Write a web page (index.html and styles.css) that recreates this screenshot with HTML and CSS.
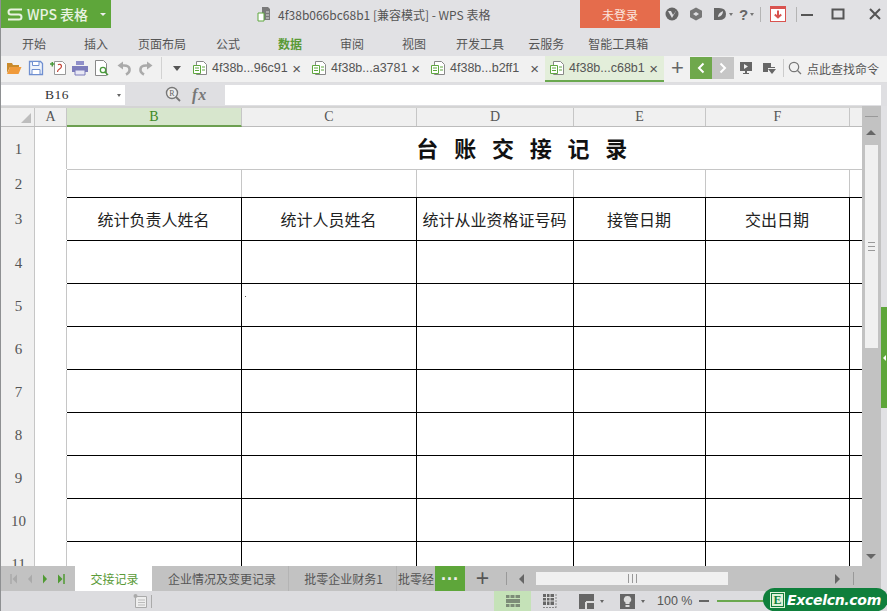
FILE: index.html
```html
<!DOCTYPE html>
<html lang="zh">
<head>
<meta charset="utf-8">
<title>4f38b066bc68b1 - WPS 表格</title>
<link rel="stylesheet" href="styles.css">
</head>
<body>
<div class="app">
  <header class="titlebar">
    <div class="brand">
      <svg class="brand-s" viewBox="0 0 16 13" width="16" height="13"><path d="M15 1.500H4Q1.500 1.500 1.500 4T4 6.500H12Q14.500 6.500 14.500 9T12 11.500H1" fill="none" stroke="#e9f3e2" stroke-width="2"/></svg>
      <span class="brand-name">WPS 表格</span>
      <span class="brand-caret"></span>
    </div>
    <div class="doc-title">
      <svg viewBox="0 0 16 16" width="16" height="16"><path d="M5 1h6l2 2v11H7V8H5z" fill="#7a7a7a"/><path d="M1 7h6v8H1z" fill="#fff" stroke="#5fa73f"/><path d="M9 6h3M9 9h3M9 12h3" stroke="#ddd"/></svg>
      <span>4f38b066bc68b1 [兼容模式] - WPS 表格</span>
    </div>
    <div class="login">未登录</div>
    <div class="win-icons">
      <svg class="wi" viewBox="0 0 14 14" width="14" height="14"><circle cx="7" cy="7" r="6.500" fill="#666"/><path d="M3 4h8L7 11z" fill="#e0e0e3"/><path d="M6 4h5L8 8z" fill="#666"/></svg>
      <svg class="wi" viewBox="0 0 14 14" width="14" height="14"><path d="M7 .5l6 3.200v6.600l-6 3.200-6-3.200V3.700z" fill="#777"/><path d="M4 7l3-2 3 2-3 2z" fill="#e0e0e3"/></svg>
      <svg class="wi wi-d" viewBox="0 0 14 14" width="14" height="14"><path d="M1 1h5q7 0 7 6t-7 6H1z" fill="#666"/><path d="M5 10q0-4 5-6 0 5-5 6z" fill="#e0e0e3"/></svg>
      <span class="mini-caret"></span>
      <span class="help">?</span>
      <span class="mini-caret"></span>
      <span class="vsep"></span>
      <svg class="wi wi-red" viewBox="0 0 16 16" width="16" height="16"><rect x=".5" y="1" width="15" height="14.500" fill="#fff" stroke="#d9534f"/><rect x="0" y="0" width="16" height="3" fill="#d9534f"/><path d="M8 4.500v7M4.800 8.500L8 11.500l3.200-3" fill="none" stroke="#d9534f" stroke-width="2"/></svg>
      <span class="vsep"></span>
      <svg class="wc wc-min" viewBox="0 0 14 14" width="14" height="14"><path d="M1 8h12" stroke="#555" stroke-width="2"/></svg>
      <svg class="wc wc-max" viewBox="0 0 14 14" width="14" height="14"><path d="M1.500 2.500h11v9h-11z" fill="none" stroke="#555" stroke-width="2"/></svg>
      <svg class="wc wc-close" viewBox="0 0 14 14" width="14" height="14"><path d="M2 2l10 10M12 2L2 12" stroke="#555" stroke-width="2"/></svg>
    </div>
  </header>

  <nav class="ribbon">
    <span class="rt rt-start">开始</span>
    <span class="rt rt-insert">插入</span>
    <span class="rt rt-page">页面布局</span>
    <span class="rt rt-formula">公式</span>
    <span class="rt rt-data">数据</span>
    <span class="rt rt-review">审阅</span>
    <span class="rt rt-view">视图</span>
    <span class="rt rt-dev">开发工具</span>
    <span class="rt rt-cloud">云服务</span>
    <span class="rt rt-smart">智能工具箱</span>
  </nav>

  <div class="toolbar">
    <div class="quick">
      <svg viewBox="0 0 16 16" width="16" height="16"><path d="M1 3h5l1 2h6v2H4L1 13z" fill="#c98a2b"/><path d="M4 7h11.500l-3 7H1z" fill="#f09a3a"/></svg>
      <svg viewBox="0 0 16 16" width="16" height="16"><path d="M1.500 1.500h11l2 2v11h-13z" fill="#eef3fb" stroke="#6f8fd0" stroke-width="1.300"/><path d="M4.500 1.500h6.500v4H4.500z" fill="#fff" stroke="#6f8fd0"/><path d="M4 9.500h8v5H4z" fill="#fff" stroke="#6f8fd0"/></svg>
      <svg viewBox="0 0 16 16" width="16" height="16"><path d="M4.500 1.500h8l3 3v10h-11z" fill="#fff" stroke="#999"/><path d="M11.500 6a2 2 0 0 0-3.500-1M11.500 6q0 2-2 3t-2 3" fill="none" stroke="#c0392b" stroke-width="1.100"/><path d="M0 4h4.500M2.300 2v4.500" stroke="#4a9a3c" stroke-width="1.500"/></svg>
      <svg viewBox="0 0 16 16" width="16" height="16"><path d="M4 1h8v4H4z" fill="#8f8fc9"/><path d="M0 6h16v6H0z" fill="#7d7dbb"/><path d="M3 10h10v5H3z" fill="#e8e8f5" stroke="#7d7dbb"/></svg>
      <svg viewBox="0 0 16 16" width="16" height="16"><path d="M1.500.5h8l3 3v12h-11z" fill="#fff" stroke="#888"/><circle cx="9" cy="10" r="2.700" fill="none" stroke="#4a9a3c" stroke-width="1.300"/><path d="M11 12l3 3" stroke="#4a9a3c" stroke-width="1.500"/></svg>
      <svg viewBox="0 0 16 16" width="16" height="16"><path d="M10 14.500q4-2 3.500-5.500T8 5.500H6" fill="none" stroke="#aaa" stroke-width="2.600"/><path d="M7 1.500v8L1.500 5.500z" fill="#aaa"/></svg>
      <svg viewBox="0 0 16 16" width="16" height="16"><path d="M6 14.500q-4-2-3.500-5.500T8 5.500h2" fill="none" stroke="#aaa" stroke-width="2.600"/><path d="M9 1.500v8l5.500-4z" fill="#aaa"/></svg>
      <span class="tb-sep"></span>
      <span class="tb-caret"></span>
    </div>
    <div class="doc-tabs">
      <div class="dt"><svg class="dt-ico" viewBox="0 0 14 15" width="14" height="15"><path d="M3.500.5h7l3 3v10h-10z" fill="#fff" stroke="#888"/><path d="M.5 4.500h7v8h-7z" fill="#fff" stroke="#5fa73f"/><path d="M2 7h4M2 9.500h4M9 6h3M9 9h3" stroke="#5fa73f"/></svg><span class="dt-name">4f38b...96c91</span><span class="dt-x">×</span></div>
      <div class="dt"><svg class="dt-ico" viewBox="0 0 14 15" width="14" height="15"><path d="M3.500.5h7l3 3v10h-10z" fill="#fff" stroke="#888"/><path d="M.5 4.500h7v8h-7z" fill="#fff" stroke="#5fa73f"/><path d="M2 7h4M2 9.500h4M9 6h3M9 9h3" stroke="#5fa73f"/></svg><span class="dt-name">4f38b...a3781</span><span class="dt-x">×</span></div>
      <div class="dt"><svg class="dt-ico" viewBox="0 0 14 15" width="14" height="15"><path d="M3.500.5h7l3 3v10h-10z" fill="#fff" stroke="#888"/><path d="M.5 4.500h7v8h-7z" fill="#fff" stroke="#5fa73f"/><path d="M2 7h4M2 9.500h4M9 6h3M9 9h3" stroke="#5fa73f"/></svg><span class="dt-name">4f38b...b2ff1</span><span class="dt-x">×</span></div>
      <div class="dt dt-active"><svg class="dt-ico" viewBox="0 0 14 15" width="14" height="15"><path d="M3.500.5h7l3 3v10h-10z" fill="#fff" stroke="#888"/><path d="M.5 4.500h7v8h-7z" fill="#fff" stroke="#5fa73f"/><path d="M2 7h4M2 9.500h4M9 6h3M9 9h3" stroke="#5fa73f"/></svg><span class="dt-name">4f38b...c68b1</span><span class="dt-x">×</span></div>
    </div>
    <div class="tb-right">
      <span class="tb-plus">+</span>
      <span class="nav-btn nav-prev"><svg viewBox="0 0 10 12" width="10" height="12"><path d="M7.500 1.500L3 6l4.500 4.500" fill="none" stroke="#fff" stroke-width="2"/></svg></span>
      <span class="nav-btn nav-next"><svg viewBox="0 0 10 12" width="10" height="12"><path d="M2.500 1.500L7 6l-4.500 4.500" fill="none" stroke="#fff" stroke-width="2"/></svg></span>
      <svg class="tr-play" viewBox="0 0 14 14" width="14" height="14"><path d="M1 1h12v9H8v2h2v1H4v-1h2v-2H1z" fill="#666"/><path d="M5 3l4 2.500L5 8z" fill="#eee"/></svg>
      <svg class="tr-pin" viewBox="0 0 14 14" width="14" height="14"><path d="M1 2h8v4h4v1H6v4H1z" fill="#666"/><path d="M6 8h8l-4 5z" fill="#666"/></svg>
      <span class="tr-sep"></span>
      <svg class="tr-find" viewBox="0 0 14 14" width="14" height="14"><circle cx="6" cy="6" r="4.700" fill="none" stroke="#777" stroke-width="1.200"/><path d="M9.500 9.500l3.500 3.500" stroke="#777" stroke-width="1.300"/></svg>
      <span class="tr-cmd">点此查找命令</span>
    </div>
  </div>

  <div class="formula">
    <div class="namebox"><span class="nb-text">B16</span><span class="nb-caret"></span></div>
    <svg class="fx-search" viewBox="0 0 16 16" width="16" height="16"><circle cx="7" cy="7" r="5.500" fill="#eee" stroke="#777" stroke-width="1.400"/><path d="M11 11l4 4" stroke="#777" stroke-width="1.800"/><text x="7" y="10" font-size="8" text-anchor="middle" fill="#666" class="fx-r">R</text></svg>
    <span class="fx">fx</span>
    <div class="fx-input"></div>
  </div>

  <div class="sheet-area">
    <div class="grid-col">
      <div class="col-heads">
        <div class="corner"><span class="corner-tri"></span></div>
        <div class="ch ch-a">A</div>
        <div class="ch ch-b ch-sel">B</div>
        <div class="ch ch-c">C</div>
        <div class="ch ch-d">D</div>
        <div class="ch ch-e">E</div>
        <div class="ch ch-f">F</div>
        <div class="ch ch-g"></div>
      </div>
      <div class="grid-body">
        <div class="row-heads">
          <div class="rh r1">1</div>
          <div class="rh r2">2</div>
          <div class="rh r3">3</div>
          <div class="rh">4</div>
          <div class="rh">5</div>
          <div class="rh">6</div>
          <div class="rh">7</div>
          <div class="rh">8</div>
          <div class="rh">9</div>
          <div class="rh">10</div>
          <div class="rh">11</div>
        </div>
        <table class="sheet">
          <colgroup><col class="c-a"><col class="c-b"><col class="c-c"><col class="c-d"><col class="c-e"><col class="c-f"><col class="c-g"></colgroup>
          <tr class="r1"><td class="gray"></td><td class="title" colspan="6">台账交接记录</td></tr>
          <tr class="r2"><td class="gray"></td><td class="gray"></td><td class="gray"></td><td class="gray"></td><td class="gray"></td><td class="gray"></td><td class="gray"></td></tr>
          <tr class="r3"><td class="gray"></td><td>统计负责人姓名</td><td>统计人员姓名</td><td>统计从业资格证号码</td><td>接管日期</td><td>交出日期</td><td></td></tr>
          <tr><td class="gray"></td><td></td><td></td><td></td><td></td><td></td><td></td></tr>
          <tr><td class="gray"></td><td></td><td><span class="speck"></span></td><td></td><td></td><td></td><td></td></tr>
          <tr><td class="gray"></td><td></td><td></td><td></td><td></td><td></td><td></td></tr>
          <tr><td class="gray"></td><td></td><td></td><td></td><td></td><td></td><td></td></tr>
          <tr><td class="gray"></td><td></td><td></td><td></td><td></td><td></td><td></td></tr>
          <tr><td class="gray"></td><td></td><td></td><td></td><td></td><td></td><td></td></tr>
          <tr><td class="gray"></td><td></td><td></td><td></td><td></td><td></td><td></td></tr>
          <tr><td class="gray"></td><td></td><td></td><td></td><td></td><td></td><td></td></tr>
        </table>
      </div>
    </div>
    <div class="vscroll">
      <span class="vs-dash"></span>
      <span class="vs-up"></span>
      <div class="vs-thumb"><span class="grip-h"></span></div>
      <span class="vs-down"></span>
    </div>
    <div class="side">
      <div class="side-tab"><span class="side-arrow"></span></div>
    </div>
  </div>

  <div class="sheet-bar">
    <div class="sheet-nav">
      <svg viewBox="0 0 8 10" width="8" height="10"><path d="M1 0v10" stroke="#aaa" stroke-width="1.500"/><path d="M7 .5v9L2.500 5z" fill="#aaa"/></svg>
      <svg viewBox="0 0 6 10" width="6" height="10"><path d="M5 .5v9L1 5z" fill="#aaa"/></svg>
      <svg viewBox="0 0 6 10" width="6" height="10"><path d="M1 .5v9l4-4.500z" fill="#4f9a32"/></svg>
      <svg viewBox="0 0 8 10" width="8" height="10"><path d="M7 0v10" stroke="#4f9a32" stroke-width="1.500"/><path d="M1 .5v9l4.500-4.500z" fill="#4f9a32"/></svg>
    </div>
    <div class="stab stab-on">交接记录</div>
    <div class="stab stab-2">企业情况及变更记录</div>
    <div class="stab stab-3">批零企业财务1</div>
    <div class="stab stab-4">批零经</div>
    <div class="stab-more">···</div>
    <span class="stab-add">+</span>
    <span class="hs-sep"></span>
    <span class="hs-left"></span>
    <div class="hs-thumb"><span class="grip-v"></span></div>
    <span class="hs-right"></span>
    <span class="hs-sep hs-sep2"></span>
  </div>

  <footer class="status">
    <svg class="st-doc" viewBox="0 0 14 14" width="14" height="14"><path d="M2.500 2.500h11v11h-11z" fill="#eee" stroke="#aaa"/><path d="M5 6h7M5 8.500h7M5 11h7" stroke="#bbb"/><circle cx="2.500" cy="2" r="2" fill="#aaa"/></svg>
    <span class="st-bar"></span>
    <div class="view-btn view-on"><svg viewBox="0 0 16 14" width="16" height="14"><path d="M1 1h14v12H1z" fill="#7d8c78"/><path d="M1 4.500h14M1 9.500h14M5 1v3.500M10 1v3.500M5 9.500V13M10 9.500V13" stroke="#c5e2b8"/></svg></div>
    <div class="view-btn"><svg viewBox="0 0 16 16" width="16" height="16"><path d="M1 1h11v11H1z" fill="#666"/><path d="M1 4.500h11M1 8h11M4.500 1v11M8 1v11" stroke="#ddd"/><path d="M14 1v14M1 14.500h13" stroke="#888" stroke-dasharray="2 1"/></svg></div>
    <svg class="st-ico st-ico1" viewBox="0 0 15 15" width="15" height="15"><path d="M0 0h15v15H0z" fill="#666"/><path d="M7 8h8M7 8v7" stroke="#ddd" stroke-width="2"/></svg>
    <span class="st-caret"></span>
    <svg class="st-ico st-ico2" viewBox="0 0 15 15" width="15" height="15"><path d="M0 0h15v15H0z" fill="#666"/><path d="M7.500 2a3.500 3.500 0 0 1 2 6.500V10h-4V8.500A3.500 3.500 0 0 1 7.500 2zM5.500 11h4v2h-4z" fill="#ddd"/></svg>
    <span class="st-caret"></span>
    <span class="zoom-val">100 %</span>
    <span class="zoom-minus"></span>
    <span class="zoom-line"></span>
  </footer>

  <div class="watermark"><span class="wm-e">E</span><span class="wm-text">Excelcn.com</span></div>
</div>
</body>
</html>
```
FILE: styles.css
```css
* { box-sizing: border-box; }
html, body { margin: 0; padding: 0; }
body { width: 887px; height: 611px; overflow: hidden; background: #e1e1e4; font-family: "Noto Sans CJK SC", "Liberation Sans", sans-serif; color: #444; }
.app { position: relative; width: 887px; height: 611px; display: flex; flex-direction: column; overflow: hidden; border-left: 1px solid #8e9092; }

/* title bar */
.titlebar { height: 28px; flex: none; display: flex; align-items: stretch; background: #e1e1e4; }
.brand { width: 110px; background: #5ea63a; color: #e9f3e2; display: flex; align-items: center; padding-left: 6px; font-size: 14px; }
.brand-s { flex: none; }
.brand-name { margin-left: 4px; width: 67px; white-space: nowrap; font-weight: 500; }
.brand-caret { width: 0; height: 0; border: 3px solid transparent; border-top: 3px solid #eee; border-bottom: 0; margin-left: 6px; }
.doc-title { width: 469px; display: flex; align-items: center; padding-left: 146px; font-size: 12px; color: #555; gap: 5px; white-space: nowrap; }
.login { width: 80px; background: #e56c4c; color: #fbe6df; font-size: 12px; display: flex; align-items: center; justify-content: center; }
.win-icons { flex: 1; display: flex; align-items: center; padding-left: 5px; }
.wi { flex: none; margin-right: 10px; }
.wi-d { margin-right: 2px; }
.wi-red { margin: 0 10px 0 9px; }
.mini-caret { width: 0; height: 0; border: 2.500px solid transparent; border-top: 3px solid #777; border-bottom: 0; margin-right: 6px; }
.help { font: 700 15px "Liberation Sans", sans-serif; color: #666; margin-right: 2px; }
.vsep { width: 1px; height: 15px; background: #b4b4b4; }
.wc { flex: none; }
.wc-min { margin-left: 3px; }
.wc-max { margin-left: 17px; }
.wc-close { margin-left: 23px; }

/* ribbon tabs */
.ribbon { height: 28px; flex: none; display: flex; align-items: center; padding-top: 2px; font-size: 12px; color: #555; }
.rt { white-space: nowrap; }
.rt-start { margin-left: 21px; }
.rt-insert { margin-left: 38px; }
.rt-page { margin-left: 30px; }
.rt-formula { margin-left: 30px; }
.rt-data { margin-left: 38px; color: #5a9a37; font-weight: 700; }
.rt-review { margin-left: 38px; }
.rt-view { margin-left: 38px; }
.rt-dev { margin-left: 30px; }
.rt-cloud { margin-left: 24px; }
.rt-smart { margin-left: 24px; }

/* toolbar */
.toolbar { height: 27px; flex: none; background: #f1f1f1; display: flex; align-items: center; border-bottom: 1px solid #dedee0; }
.quick { width: 187px; height: 100%; display: flex; align-items: center; padding: 0 0 2px 5px; gap: 6px; flex: none; }
.quick svg { flex: none; }
.tb-sep { width: 1px; height: 22px; background: #d2d2d2; margin-left: 1px; }
.tb-caret { width: 0; height: 0; border: 4.500px solid transparent; border-top: 5px solid #555; border-bottom: 0; margin-left: 5px; }
.doc-tabs { display: flex; height: 100%; flex: none; }
.dt { width: 119px; height: 100%; display: flex; align-items: center; padding: 0 6px 2px 5px; font: 12.500px "Liberation Sans", "Noto Sans CJK SC", sans-serif; color: #555; }
.dt-ico { flex: none; margin-right: 5px; }
.dt-name { white-space: nowrap; }
.dt-x { margin-left: auto; font-size: 15px; color: #555; }
.dt-active { background: #e3eeda; border-bottom: 2px solid #6aa84f; padding-bottom: 0; }
.tb-right { flex: 1; display: flex; align-items: center; height: 100%; min-width: 0; padding-bottom: 2px; }
.tb-plus { width: 25px; text-align: center; font: 300 22px/22px "Liberation Sans", sans-serif; color: #666; margin-left: 1px; }
.nav-btn { width: 22px; height: 22px; display: flex; align-items: center; justify-content: center; background: #6fa84c; }
.nav-next { background: #c6c6c6; }
.tr-play { margin-left: 5px; flex: none; }
.tr-pin { margin-left: 9px; flex: none; }
.tr-sep { width: 1px; height: 18px; background: #ccc; margin-left: 7px; }
.tr-find { margin-left: 4px; flex: none; }
.tr-cmd { margin-left: 5px; font-size: 12px; white-space: nowrap; color: #555; }

/* formula bar */
.formula { height: 23px; flex: none; display: flex; align-items: flex-start; background: #dfdfe2; padding-top: 2px; }
.namebox { width: 124px; height: 20px; background: #fff; position: relative; display: flex; align-items: center; font: 13.500px "Liberation Serif", serif; color: #333; padding-left: 44px; }
.nb-text { letter-spacing: .5px; }
.nb-caret { position: absolute; right: 4px; top: 9px; width: 0; height: 0; border: 2.500px solid transparent; border-top: 3px solid #666; border-bottom: 0; }
.fx-search { margin: 1px 0 0 40px; flex: none; }
.fx-r { font-family: "Liberation Serif", serif; }
.fx { margin-left: 11px; width: 33px; font: italic 700 16px/20px "Liberation Serif", serif; color: #777; letter-spacing: 1px; }
.fx-input { width: 656px; height: 20px; background: #fff; }

/* sheet */
.sheet-area { height: 460px; flex: none; display: flex; }
.grid-col { width: 861px; flex: none; display: flex; flex-direction: column; overflow: hidden; background: #fff; border-top: 2px solid #d4d4d4; }
.col-heads { height: 19px; flex: none; display: flex; background: #f0f0f0; font: 14px "Liberation Serif", serif; color: #555; border-bottom: 1px solid #bcbcbc; }
.corner { width: 34px; flex: none; border-right: 1px solid #c6c6c6; position: relative; }
.corner-tri { position: absolute; right: 3px; bottom: 3px; width: 0; height: 0; border-left: 10px solid transparent; border-bottom: 10px solid #bdbdbd; }
.ch { flex: none; display: flex; align-items: center; justify-content: center; border-right: 1px solid #c6c6c6; }
.ch-a { width: 32px; }
.ch-b { width: 175px; }
.ch-c { width: 175px; }
.ch-d { width: 157px; }
.ch-e { width: 132px; }
.ch-f { width: 144px; }
.ch-g { flex: 1; border-right: 0; }
.ch-sel { background: #d7e6cd; color: #3f8a26; border-bottom: 2px solid #6c9f50; margin-bottom: -1px; }
.grid-body { flex: 1; display: flex; min-height: 0; }
.row-heads { width: 34px; flex: none; background: #f0f0f0; font: 15px "Liberation Serif", serif; color: #555; border-right: 1px solid #c6c6c6; }
.rh { height: 43px; display: flex; align-items: center; justify-content: center; padding: 4px 0 0 2px; }
.rh.r1 { height: 42px; padding-top: 2px; }
.rh.r2 { height: 28px; padding-top: 2px; }
.rh.r3 { padding-top: 2px; }
.sheet { border-collapse: collapse; table-layout: fixed; width: 944px; flex: none; font: 16px "Noto Sans CJK SC", sans-serif; color: #222; align-self: flex-start; }
col.c-a { width: 31px; }
col.c-b { width: 175px; }
col.c-c { width: 175px; }
col.c-d { width: 157px; }
col.c-e { width: 132px; }
col.c-f { width: 144px; }
col.c-g { width: 130px; }
.sheet tr { height: 43px; }
.sheet tr.r1 { height: 42px; }
.sheet tr.r2 { height: 28px; }
.sheet td { border: 1px solid #000; padding: 0; text-align: center; white-space: nowrap; position: relative; overflow: visible; }
.sheet tr:first-child td { border-top: 0; }
.sheet td:first-child { border-left: 0; }
.sheet td.gray { border-left: 0; border-top: 0; border-right: 1px solid #c6c6c6; border-bottom: 1px solid #fff; }
.sheet tr.r2 td.gray { border-top: 1px solid #c6c6c6; border-bottom: 1px solid #000; }
.sheet tr.r2 td.gray:first-child { border-top: 0; border-bottom-color: #fff; }
.sheet td.title { font-size: 22px; font-weight: 700; letter-spacing: 15.800px; padding: 0 0 2px 14px; color: #111; border-right: 0; border-bottom: 1px solid #c6c6c6; }
.speck { position: absolute; left: 3px; top: 12px; width: 1px; height: 1px; background: #555; }
.vscroll { width: 19px; flex: none; background: #c2c2c2; position: relative; }
.vs-dash { position: absolute; left: 3px; top: 10px; width: 13px; height: 1px; background: #999; }
.vs-up { position: absolute; left: 4px; top: 24px; width: 0; height: 0; border: 5px solid transparent; border-bottom: 5px solid #666; border-top: 0; }
.vs-thumb { position: absolute; left: 3px; top: 39px; width: 13px; height: 203px; background: #f0f0f0; display: flex; align-items: center; justify-content: center; }
.vs-down { position: absolute; left: 4px; bottom: 7px; width: 0; height: 0; border: 5px solid transparent; border-top: 5px solid #666; border-bottom: 0; }
.grip-h { width: 7px; height: 9px; border-top: 1px solid #999; border-bottom: 1px solid #999; background: linear-gradient(#999, #999) center / 100% 1px no-repeat; }
.side { flex: 1; position: relative; }
.side-tab { position: absolute; left: 0; top: 201px; width: 6px; height: 101px; background: #5ea63a; display: flex; align-items: center; }
.side-arrow { width: 0; height: 0; border: 3px solid transparent; border-right: 3px solid #fff; border-left: 0; margin-left: 2px; }

/* sheet tabs */
.sheet-bar { height: 25px; flex: none; display: flex; align-items: center; background: #c2c2c2; font-size: 12px; color: #555; width: 880px; }
.sheet-nav { width: 74px; flex: none; display: flex; align-items: center; gap: 9px; padding-left: 9px; }
.sheet-nav svg { flex: none; }
.stab { height: 100%; display: flex; align-items: center; justify-content: center; flex: none; white-space: nowrap; border-right: 1px solid #b4b4b4; }
.stab-on { width: 77px; background: #fff; color: #5a9a37; border-right: 0; padding-left: 2px; }
.stab-2 { width: 137px; padding-left: 4px; }
.stab-3 { width: 108px; padding-left: 2px; }
.stab-4 { width: 38px; border-right: 0; overflow: hidden; justify-content: flex-start; padding-left: 1px; }
.stab-more { width: 30px; height: 100%; background: #5ea63a; color: #eee; display: flex; align-items: center; justify-content: center; font: 700 18px/1 "Liberation Sans", sans-serif; flex: none; }
.stab-add { width: 35px; text-align: center; font: 400 23px/23px "Liberation Sans", sans-serif; color: #555; flex: none; }
.hs-sep { width: 1px; height: 13px; background: #999; flex: none; margin-left: 6px; }
.hs-left { width: 0; height: 0; border: 5px solid transparent; border-right: 5px solid #666; border-left: 0; margin-left: 12px; flex: none; }
.hs-thumb { width: 192px; height: 13px; background: #f0f0f0; margin-left: 12px; display: flex; align-items: center; justify-content: center; flex: none; }
.grip-v { width: 9px; height: 9px; border-left: 1px solid #999; border-right: 1px solid #999; background: linear-gradient(#999, #999) center / 1px 100% no-repeat; }
.hs-right { width: 0; height: 0; border: 5px solid transparent; border-left: 5px solid #666; border-right: 0; margin-left: 107px; flex: none; }
.hs-sep2 { margin-left: 13px; }

/* status bar */
.status { height: 20px; flex: none; display: flex; align-items: center; background: #dcdcdf; font-size: 13px; color: #555; }
.st-doc { margin-left: 132px; flex: none; }
.st-bar { width: 1px; height: 13px; background: #aaa; margin-left: 4px; }
.view-btn { width: 37px; height: 20px; display: flex; align-items: center; justify-content: center; flex: none; }
.view-on { margin-left: 342px; background: #c5e2b8; }
.st-ico { flex: none; }
.st-ico1 { margin-left: 11px; }
.st-ico2 { margin-left: 16px; }
.st-caret { width: 0; height: 0; border: 2.500px solid transparent; border-top: 3px solid #666; border-bottom: 0; margin-left: 6px; }
.zoom-val { margin-left: 12px; font: 12.500px "Liberation Sans", sans-serif; white-space: nowrap; }
.zoom-minus { width: 10px; height: 2px; background: #666; margin-left: 7px; }
.zoom-line { width: 50px; height: 2px; background: #6aa84f; margin-left: 8px; }

/* watermark over the status bar */
.watermark { position: absolute; left: 762px; top: 588px; width: 125px; height: 23px; background: #0f7f3c; border-radius: 12px; display: flex; align-items: center; padding-left: 8px; gap: 3px; }
.wm-e { width: 13px; height: 14px; background: #dff2d8; border: 1px solid #0f7f3c; outline: 1px solid #dff2d8; color: #0f7f3c; font: 700 12px/12px "Liberation Serif", serif; text-align: center; }
.wm-text { font: italic 700 14px "DejaVu Sans", sans-serif; color: #fff; white-space: nowrap; letter-spacing: -.3px; }
```
